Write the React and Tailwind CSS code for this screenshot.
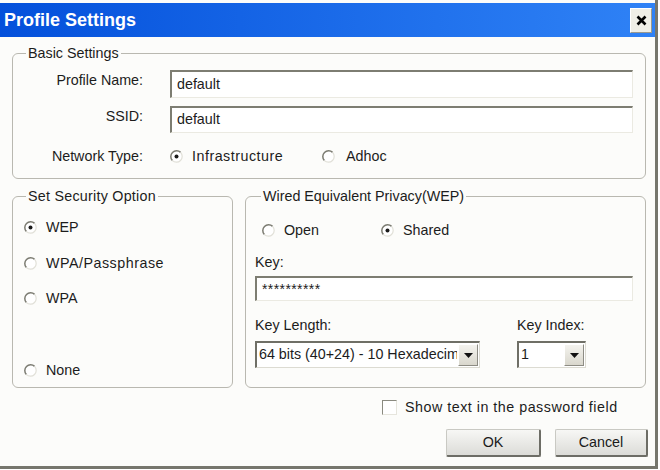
import React from 'react';

function Radio({ checked }) {
    return (
        <svg width="13" height="13" viewBox="0 0 13 13" className="shrink-0">
            <circle cx="6.5" cy="6.5" r="5.8" fill="#ffffff" />
            <path d="M 2.4 10.6 A 5.8 5.8 0 0 1 10.6 2.4" fill="none" stroke="#7c7c72" strokeWidth="1.5" />
            <path d="M 10.6 2.4 A 5.8 5.8 0 0 1 2.4 10.6" fill="none" stroke="#e1e0d8" strokeWidth="1.2" />
            {checked && <circle cx="6.5" cy="6.5" r="2" fill="#1a1a1a" />}
        </svg>
    );
}

function Option({ checked, label, className = '', textClass = '' }) {
    return (
        <div className={`flex items-center leading-[16px] ${className}`}>
            <Radio checked={checked} />
            <span className={`ml-[9px] ${textClass}`}>{label}</span>
        </div>
    );
}

function TextBox({ value, className = '' }) {
    return (
        <div
            className={`bg-white border-t-2 border-l-2 border-b border-r border-t-[#7d7d72] border-l-[#7d7d72] border-b-[#ebeae2] border-r-[#ebeae2] flex items-center pl-[5px] ${className}`}
        >
            {value}
        </div>
    );
}

function Combo({ value, className = '' }) {
    return (
        <div
            className={`bg-white border-t-2 border-l-2 border-b border-r border-t-[#6f6f66] border-l-[#6f6f66] border-b-[#dcdbd2] border-r-[#dcdbd2] flex items-stretch ${className}`}
        >
            <div className="flex-1 overflow-hidden whitespace-nowrap pl-[2px] flex items-center">{value}</div>
            <div className="w-[20px] m-[1px] bg-gradient-to-b from-[#f4f3ee] to-[#d9d7cd] border-r border-b border-r-[#8d8c84] border-b-[#8d8c84] border-t border-l border-t-white border-l-white flex items-center justify-center">
                <svg width="9" height="5" viewBox="0 0 9 5">
                    <path d="M0 0 H9 L4.5 5 Z" fill="#111" />
                </svg>
            </div>
        </div>
    );
}

function Button({ children, className = '' }) {
    return (
        <button
            className={`h-[28px] bg-gradient-to-b from-[#f7f7f5] to-[#dcdcd8] border border-[#c9c9c3] border-r-2 border-b-2 border-r-[#6d6d66] border-b-[#6d6d66] rounded-[2px] text-[#1a1a1a] ${className}`}
        >
            {children}
        </button>
    );
}

export default function App() {
    return (
        <div className="w-[660px] h-[470px] bg-white text-[14.3px] text-[#1c1c1c] font-['Liberation_Sans',Arial,sans-serif] overflow-hidden">
            <div className="w-[658px] h-[469px] bg-[#fcfcfa] border-r-[3px] border-b-[3px] border-[#76766d] flex flex-col">
                <div className="mt-[3px] h-[34px] bg-gradient-to-r from-[#0450db] to-[#2f82f6] flex items-center justify-between pl-[4px] pr-[3px]">
                    <span className="text-white font-bold text-[18px] leading-none">Profile Settings</span>
                    <div className="w-[22px] h-[25px] bg-[#efeee6] border border-t-white border-l-white border-r-[#9a998f] border-b-[#9a998f] flex items-center justify-center">
                        <svg width="11" height="11" viewBox="0 0 11 11">
                            <path d="M1.5 1.5 L9.5 9.5 M9.5 1.5 L1.5 9.5" stroke="#000" strokeWidth="2.6" />
                        </svg>
                    </div>
                </div>

                <fieldset className="mt-[8px] ml-[12px] w-[634px] h-[134px] border border-[#b9b8b0] rounded-[6px]">
                    <legend className="ml-[13px] px-[2px] leading-[16px]">Basic Settings</legend>
                    <div className="flex items-center mt-[9px]">
                        <span className="w-[130px] text-right -mt-[6px]">Profile Name:</span>
                        <TextBox value="default" className="ml-[27px] w-[463px] h-[28px]" />
                    </div>
                    <div className="flex items-center mt-[8px]">
                        <span className="w-[130px] text-right -mt-[5px]">SSID:</span>
                        <TextBox value="default" className="ml-[27px] w-[463px] h-[27px]" />
                    </div>
                    <div className="flex items-center mt-[15px] leading-[16px]">
                        <span className="w-[130px] text-right">Network Type:</span>
                        <Option checked label="Infrastructure" textClass="tracking-[0.5px]" className="ml-[27px] w-[152px]" />
                        <Option label="Adhoc" textClass="ml-[11px]" />
                    </div>
                </fieldset>

                <div className="flex mt-[9px] ml-[12px]">
                    <fieldset className="w-[221px] h-[200px] border border-[#b9b8b0] rounded-[6px] pl-[11px]">
                        <legend className="ml-[2px] px-[2px] leading-[16px] tracking-[0.25px]">Set Security Option</legend>
                        <Option checked label="WEP" className="mt-[15px]" />
                        <Option label="WPA/Passphrase" textClass="tracking-[0.5px]" className="mt-[20px]" />
                        <Option label="WPA" className="mt-[19px]" />
                        <Option label="None" className="mt-[56px]" />
                    </fieldset>

                    <fieldset className="ml-[12px] w-[401px] h-[200px] border border-[#b9b8b0] rounded-[6px] pl-[9px]">
                        <legend className="ml-[6px] px-[2px] leading-[16px]">Wired Equivalent Privacy(WEP)</legend>
                        <div className="flex mt-[18px] ml-[7px]">
                            <Option label="Open" className="w-[119px]" />
                            <Option checked label="Shared" />
                        </div>
                        <div className="mt-[16px] leading-[16px]">Key:</div>
                        <TextBox value={<span className="text-[14px] tracking-[0.4px]">**********</span>} className="mt-[6px] w-[378px] h-[25px] pl-[3px]" />
                        <div className="flex mt-[16px]">
                            <div>
                                <div className="leading-[16px]">Key Length:</div>
                                <Combo value="64 bits (40+24) - 10 Hexadecimal" className="mt-[8px] w-[225px] h-[27px]" />
                            </div>
                            <div className="ml-[37px]">
                                <div className="leading-[16px]">Key Index:</div>
                                <Combo value="1" className="mt-[8px] w-[69px] h-[27px]" />
                            </div>
                        </div>
                    </fieldset>
                </div>

                <div className="flex items-center mt-[11px] ml-[382px] leading-[16px]">
                    <div className="w-[15px] h-[15px] bg-white border-t border-l border-t-[#8a8a80] border-l-[#8a8a80] border-b border-r border-b-[#e6e5dd] border-r-[#e6e5dd]" />
                    <span className="ml-[8px] tracking-[0.5px]">Show text in the password field</span>
                </div>

                <div className="flex mt-[14px] ml-[446px]">
                    <Button className="w-[95px]">OK</Button>
                    <Button className="ml-[14px] w-[93px]">Cancel</Button>
                </div>
            </div>
        </div>
    );
}
